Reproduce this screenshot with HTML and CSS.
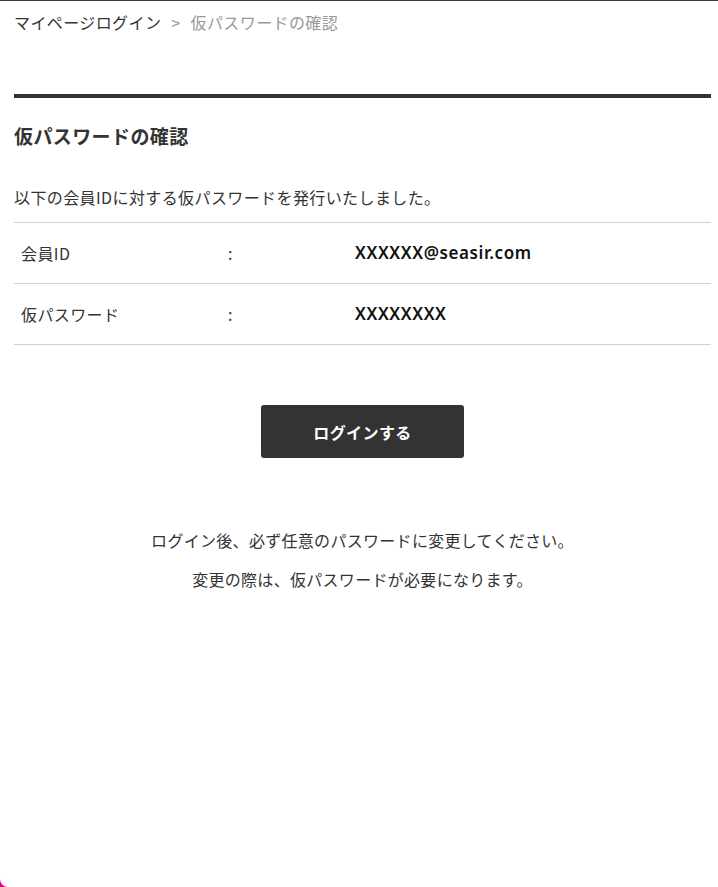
FILE: index.html
```html
<!doctype html>
<html lang="ja">
  <head>
    <meta charset="UTF-8" />
    <meta name="viewport" content="width=device-width, initial-scale=1.0" />
    <title>仮パスワードの確認</title>
    <link rel="stylesheet" href="styles.css">
  </head>
  <body>
    <div class="page">
      <div class="breadcrumb">
        <a href="#" class="crumb-link">マイページログイン</a>
        <span class="crumb-sep">&gt;</span>
        <span class="crumb-current">仮パスワードの確認</span>
      </div>
      <div class="section">
        <h1 class="section-title">仮パスワードの確認</h1>
        <p class="lead">以下の会員IDに対する仮パスワードを発行いたしました。</p>
        <div class="info-table">
          <div class="info-row">
            <span class="info-label">会員ID</span>
            <span class="info-colon">:</span>
            <strong class="info-value">XXXXXX@seasir.com</strong>
          </div>
          <div class="info-row">
            <span class="info-label">仮パスワード</span>
            <span class="info-colon">:</span>
            <strong class="info-value">XXXXXXXX</strong>
          </div>
        </div>
        <div class="actions">
          <a href="#" class="login-btn">ログインする</a>
        </div>
        <div class="notes">
          <p>ログイン後、必ず任意のパスワードに変更してください。</p>
          <p>変更の際は、仮パスワードが必要になります。</p>
        </div>
      </div>
    </div>
  </body>
</html>
```

FILE: styles.css
```css
* {
  margin: 0;
  padding: 0;
  box-sizing: border-box;
}

html {
  background: #e4007f;
}

body {
  font-family: 'Noto Sans CJK JP', 'Noto Sans', sans-serif;
  color: #333333;
  font-size: 16px;
  line-height: 24px;
  letter-spacing: 0.4px;
}

.page {
  background: #ffffff;
  min-height: 100vh;
  border-top: 1px solid #3a3a3a;
  border-bottom-left-radius: 8px;
  padding: 0 7px 0 14px;
}

.breadcrumb {
  padding-top: 9px;
  height: 93px;
  display: flex;
  gap: 10px;
}

.crumb-link {
  color: #333333;
  text-decoration: none;
}

.crumb-sep,
.crumb-current {
  color: #999999;
}

.section {
  border-top: 4px solid #333333;
}

.section-title {
  font-size: 19px;
  font-weight: 700;
  line-height: 24px;
  margin-top: 26px;
}

.lead {
  margin-top: 37px;
  margin-bottom: 13px;
}

.info-table {
  border-top: 1px solid #cfcfcf;
}

.info-row {
  display: grid;
  grid-template-columns: 206px 128px 1fr;
  align-items: center;
  height: 61px;
  border-bottom: 1px solid #cfcfcf;
  padding-left: 7px;
}

.info-colon {
  padding-left: 1px;
}

.info-value {
  font-family: 'Noto Sans', 'Noto Sans CJK JP', sans-serif;
  font-size: 17px;
  font-weight: 600;
  letter-spacing: 0.6px;
  color: #111111;
}

.actions {
  display: flex;
  justify-content: center;
  margin-top: 60px;
}

.login-btn {
  display: flex;
  align-items: center;
  justify-content: center;
  width: 203px;
  height: 53px;
  background: #333333;
  color: #ffffff;
  border-radius: 3px;
  font-weight: 700;
  text-decoration: none;
}

.notes {
  margin-top: 70px;
  text-align: center;
  letter-spacing: 0.3px;
}

.notes p + p {
  margin-top: 15px;
}
```
